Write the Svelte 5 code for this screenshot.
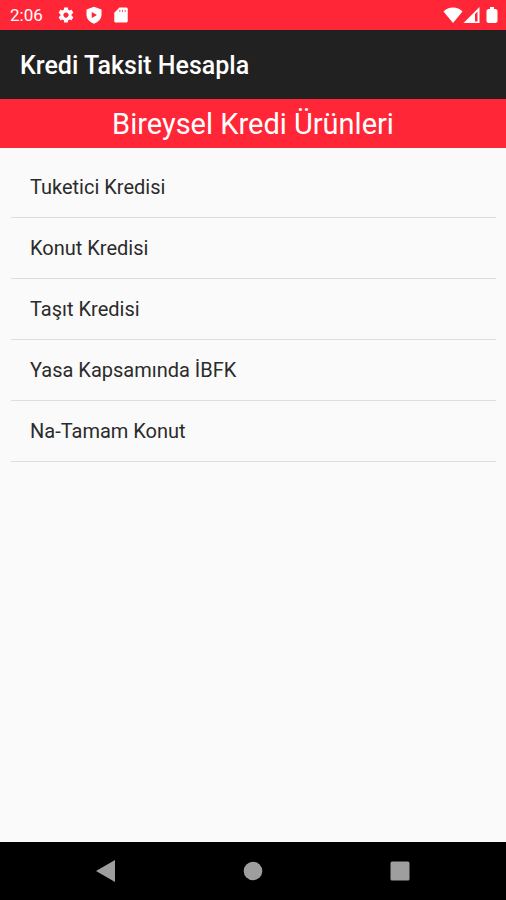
<script>
  const products = [
    'Tuketici Kredisi',
    'Konut Kredisi',
    'Taşıt Kredisi',
    'Yasa Kapsamında İBFK',
    'Na-Tamam Konut'
  ];

  let selected = $state(null);
</script>

<div class="screen">
  <div class="status">
    <span class="time">2:06</span>
    <svg class="gear" width="18" height="18" viewBox="0 0 24 24" aria-hidden="true">
      <path fill-rule="evenodd" d="M19.43 12.98c.04-.32.07-.64.07-.98s-.03-.66-.07-.98l2.11-1.65c.19-.15.24-.42.12-.64l-2-3.46c-.12-.22-.39-.3-.61-.22l-2.49 1c-.52-.4-1.08-.73-1.69-.98l-.38-2.65C14.46 2.18 14.25 2 14 2h-4c-.25 0-.46.18-.49.42l-.38 2.65c-.61.25-1.17.59-1.69.98l-2.49-1c-.23-.09-.49 0-.61.22l-2 3.46c-.13.22-.07.49.12.64l2.11 1.65c-.04.32-.07.65-.07.98s.03.66.07.98l-2.11 1.65c-.19.15-.24.42-.12.64l2 3.46c.12.22.39.3.61.22l2.49-1c.52.4 1.08.73 1.69.98l.38 2.65c.03.24.24.42.49.42h4c.25 0 .46-.18.49-.42l.38-2.65c.61-.25 1.17-.59 1.69-.98l2.49 1c.23.09.49 0 .61-.22l2-3.46c.12-.22.07-.49-.12-.64l-2.11-1.65zM12 15.5c-1.93 0-3.5-1.57-3.5-3.5s1.57-3.5 3.5-3.5 3.5 1.57 3.5 3.5-1.57 3.5-3.5 3.5z" />
    </svg>
    <svg class="shield" width="18" height="18" viewBox="0 0 24 24" aria-hidden="true">
      <path fill-rule="evenodd" d="M12 1 2 4.500v7c0 5.500 4.200 10 10 12 5.800-2 10-6.500 10-12v-7zM9 8v8l7-4z" />
    </svg>
    <svg class="card" width="18" height="18" viewBox="0 0 24 24" aria-hidden="true">
      <path fill-rule="evenodd" d="M19 2h-9L3 9v11c0 1.100.9 2 2 2h14c1.100 0 2-.9 2-2V4c0-1.100-.9-2-2-2zM10 5h1v3h-1zM13.500 5h1v3h-1zM17 5h1v3h-1z" />
    </svg>
    <div class="signals">
      <svg width="20" height="18" viewBox="0 0 20 18" aria-hidden="true">
        <path d="M10 17 .5 5.500C3 3 6.300 1.500 10 1.500S17 3 19.500 5.500z" />
      </svg>
      <svg width="17" height="18" viewBox="0 0 17 18" aria-hidden="true">
        <path fill-rule="evenodd" d="M.5 17 16.500 1v16zM12 8v7.500h2.500V5.500z" />
      </svg>
      <svg class="battery" width="12" height="18" viewBox="0 0 12 18" aria-hidden="true">
        <path d="M4 1h4v2h2l1.500 1.500v11L10 17H2L.5 15.500v-11L2 3h2z" />
      </svg>
    </div>
  </div>

  <header>
    <h1>Kredi Taksit Hesapla</h1>
  </header>
  <h2>Bireysel Kredi Ürünleri</h2>

  <ul>
    {#each products as product}
      <li>
        <button class:selected={selected === product} onclick={() => (selected = product)}>
          {product}
        </button>
      </li>
    {/each}
  </ul>

  <nav>
    <button aria-label="Geri">
      <svg width="20" height="22" viewBox="0 0 20 22"><path d="M19 0v22L0 11z" /></svg>
    </button>
    <button aria-label="Ana ekran">
      <svg width="20" height="20" viewBox="0 0 20 20"><circle cx="10" cy="10" r="9.300" /></svg>
    </button>
    <button aria-label="Son uygulamalar">
      <svg width="20" height="20" viewBox="0 0 20 20"><rect x=".5" y=".5" width="19" height="19" rx="1.500" /></svg>
    </button>
  </nav>
</div>

<style>
:global(body) {
  margin: 0;
  background-color: #fafafa;
}

.screen {
  display: flex;
  flex-direction: column;
  min-height: 100vh;
  font-family: Roboto, "Noto Sans", sans-serif;
  color: #2b2b2b;
}

svg {
  display: block;
  flex: none;
}

.status {
  display: flex;
  align-items: center;
  height: 30px;
  padding: 0 8px 0 10px;
  background-color: #ff2638;
  color: #fff;
}
.status svg {
  fill: #fff;
}
.time {
  font-size: 17px;
  line-height: 30px;
}
.gear {
  margin-left: 14px;
}
.shield {
  margin-left: 10px;
}
.card {
  margin-left: 9px;
}
.signals {
  display: flex;
  align-items: center;
  margin-left: auto;
}
.battery {
  margin-left: 6px;
}

header {
  padding: 19px 20px 17px;
  background-color: #212121;
}
h1 {
  margin: 0;
  font-size: 25px;
  font-weight: 500;
  line-height: 33px;
  color: #fff;
}

h2 {
  margin: 0;
  padding: 3px 0 1px;
  background-color: #ff2638;
  font-size: 29px;
  font-weight: 400;
  line-height: 45px;
  text-align: center;
  color: #fff;
}

ul {
  flex: 1;
  margin: 0;
  padding: 9px 10px 9px 11px;
  list-style: none;
}
li {
  border-bottom: 1px solid #dedede;
}
button {
  border: 0;
  background: none;
  font: inherit;
  color: inherit;
  cursor: pointer;
}
li button {
  display: block;
  width: 100%;
  padding: 18px 19px;
  font-size: 20px;
  line-height: 24px;
  text-align: left;
}
.selected {
  background-color: #eee;
}

nav {
  display: grid;
  grid-template-columns: repeat(3, 1fr);
  height: 58px;
  padding: 0 33px;
  background-color: #000;
}
nav button {
  display: flex;
  align-items: center;
  justify-content: center;
  padding: 0;
}
nav svg {
  fill: #9e9e9e;
}
</style>
